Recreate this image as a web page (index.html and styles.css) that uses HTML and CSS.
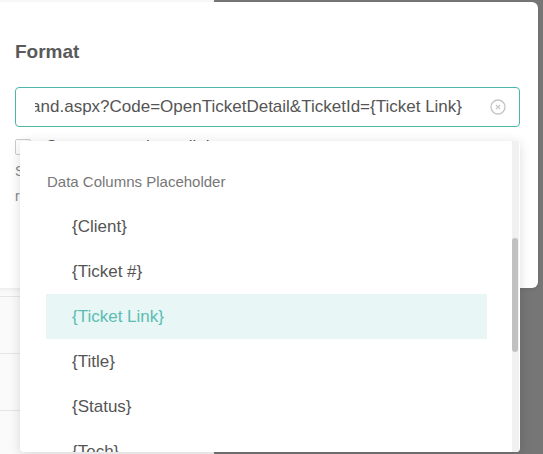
FILE: index.html
```html
<!DOCTYPE html>
<html lang="en">
  <head>
    <meta charset="UTF-8" />
    <meta name="viewport" content="width=device-width, initial-scale=1.0" />
    <title>Format Link</title>
    <link rel="stylesheet" href="styles.css">
  </head>
  <body>
    <div class="page">
      <div class="page-top"></div>
      <div class="row"></div>
      <div class="row"></div>
      <div class="row"></div>
    </div>

    <div class="modal">
      <h2 class="modal-title">Format</h2>
      <div class="field">
        <div class="field-value">
          <span>https://support.example.com/Command.aspx?Code=OpenTicketDetail&amp;TicketId={Ticket Link}</span>
        </div>
        <span class="clear-btn">
          <svg width="16" height="16" viewBox="0 0 16 16">
            <circle cx="8" cy="8" r="7" fill="none" stroke="#c4c4c4" stroke-width="1.3" />
            <path d="M5.9 5.9 L10.1 10.1 M10.1 5.9 L5.9 10.1" stroke="#c4c4c4" stroke-width="1.3" />
          </svg>
        </span>
      </div>
      <label class="check">
        <span class="check-box"></span>
        Convert as a hyperlink
      </label>
      <p class="help">
        Select a data column to insert it as a placeholder,<br />
        replaced with the value of each ticket.
      </p>
    </div>

    <div class="dropdown">
      <div class="group">
        <div class="group-title">Data Columns Placeholder</div>
        <div class="option">{Client}</div>
        <div class="option">{Ticket #}</div>
        <div class="option active">{Ticket Link}</div>
        <div class="option">{Title}</div>
        <div class="option">{Status}</div>
        <div class="option">{Tech}</div>
        <div class="option">{Due Date}</div>
      </div>
      <div class="scrollbar"><div class="thumb"></div></div>
    </div>
  </body>
</html>
```

FILE: styles.css
```css
body {
  font-family: "Liberation Sans", Arial, sans-serif;
  background-color: #767676;
  margin: 0;
  height: 454px;
  overflow: hidden;
  position: relative;
}
.page {
  width: 214px;
  height: 454px;
  background: #fafafa;
}
.page-top {
  height: 296px;
  border-bottom: 1px solid #e6e6e6;
}
.row {
  height: 56px;
  border-bottom: 1px solid #e6e6e6;
}
.modal {
  position: absolute;
  left: -10px;
  top: 2px;
  width: 548px;
  height: 286px;
  box-sizing: border-box;
  padding: 0 18px 0 25px;
  background: #fff;
  border-radius: 6px;
  box-shadow: 0 1px 4px rgba(0, 0, 0, 0.08);
}
.modal-title {
  margin: 38px 0 0;
  font-size: 19px;
  font-weight: bold;
  color: #5a5a5a;
  line-height: 24px;
}
.field {
  margin-top: 23px;
  height: 40px;
  box-sizing: border-box;
  border: 1px solid #4db6ab;
  border-radius: 4px;
  display: flex;
  align-items: center;
  padding: 0 13px 0 19px;
}
.field-value {
  flex: 1;
  display: flex;
  justify-content: flex-end;
  overflow: hidden;
  white-space: nowrap;
  font-size: 17px;
  color: #555;
  padding-right: 28px;
}
.clear-btn {
  display: flex;
}
.check {
  display: flex;
  align-items: center;
  gap: 14px;
  margin-top: 10px;
  font-size: 17px;
  color: #555;
}
.check-box {
  width: 14px;
  height: 14px;
  border: 1px solid #ccc;
  border-radius: 2px;
}
.help {
  margin: 2px 0 0;
  font-size: 14px;
  line-height: 25px;
  color: #888;
}
.dropdown {
  position: absolute;
  left: 20px;
  top: 141px;
  width: 500px;
  height: 311px;
  background: #fff;
  border-radius: 4px;
  box-shadow: 0 2px 12px rgba(0, 0, 0, 0.14);
  overflow: hidden;
}
.group {
  padding: 18px 33px 0 26px;
}
.group-title {
  height: 45px;
  line-height: 45px;
  padding-left: 1px;
  font-size: 15px;
  color: #777;
}
.option {
  height: 45px;
  line-height: 45px;
  padding-left: 26px;
  font-size: 17px;
  color: #555;
}
.option.active {
  background: #e8f6f5;
  color: #5bbdb2;
}
.scrollbar {
  position: absolute;
  right: 1px;
  top: 0;
  width: 7px;
  height: 100%;
  background: #f1f1f1;
}
.thumb {
  margin-top: 97px;
  width: 6px;
  height: 114px;
  border-radius: 3px;
  background: #c1c1c1;
}
```
